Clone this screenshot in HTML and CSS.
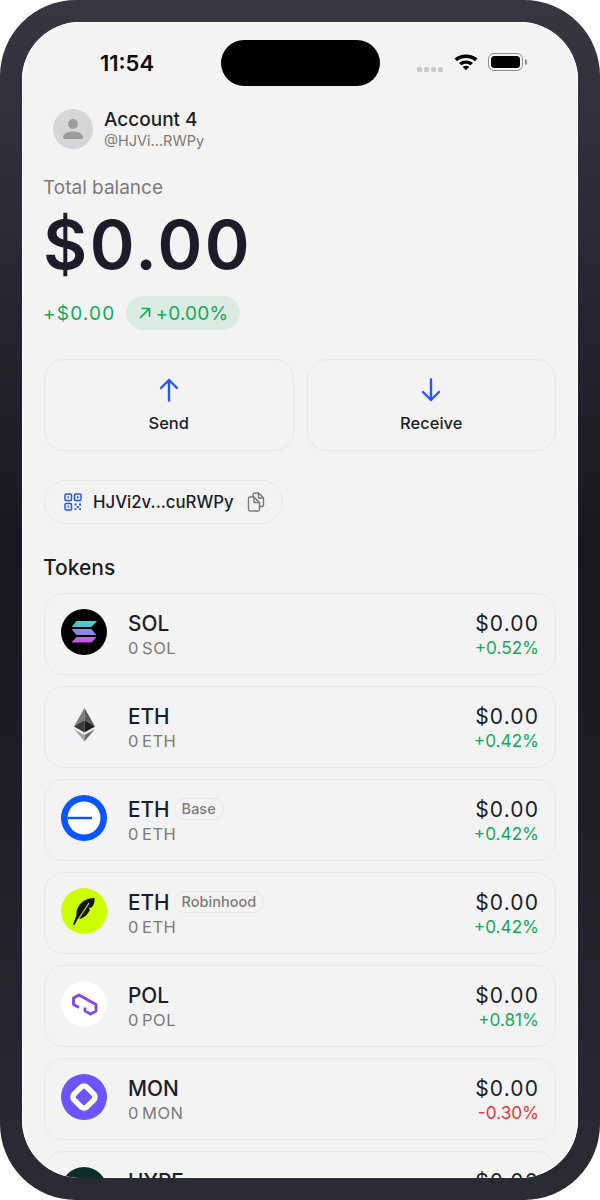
FILE: index.html
```html
<!DOCTYPE html>
<html lang="en">
<head>
    <meta charset="UTF-8">
    <meta name="viewport" content="width=device-width, initial-scale=1.0">
    <title>Wallet</title>
    <link rel="stylesheet" href="styles.css">
</head>
<body>
    <div class="device">
        <div class="screen">
            <div class="status-bar">
                <span class="time">11:54</span>
                <div class="island"></div>
                <div class="status-icons">
                    <div class="signal"><i></i><i></i><i></i><i></i></div>
                    <svg class="wifi" width="26" height="20" viewBox="0 0 26 20">
                        <path d="M1.500 6.600C7.800 1 18.200 1 24.500 6.600L22 9.200C17 4.900 9 4.900 4 9.200Z" fill="#000"/>
                        <path d="M6 11C10 7.700 16 7.700 20 11L17.700 13.300C15 11.200 11 11.200 8.300 13.300Z" fill="#000"/>
                        <path d="M9.700 14.700C11.700 13.300 14.300 13.300 16.300 14.700L13 18.200Z" fill="#000"/>
                    </svg>
                    <div class="battery"><div class="battery-fill"></div></div>
                    <div class="battery-cap"></div>
                </div>
            </div>

            <div class="account">
                <div class="avatar">
                    <svg width="24" height="24" viewBox="0 0 24 24">
                        <circle cx="12" cy="7" r="5" fill="#9b9ba0"/>
                        <path d="M2 20.500C2 16.500 7 14.500 12 14.500S22 16.500 22 20.500C22 21.500 21 22 20 22H4C3 22 2 21.500 2 20.500Z" fill="#9b9ba0"/>
                    </svg>
                </div>
                <div>
                    <div class="account-name">Account 4</div>
                    <div class="account-handle">@HJVi...RWPy</div>
                </div>
            </div>

            <div class="balance">
                <div class="balance-label">Total balance</div>
                <div class="balance-value">$0.00</div>
                <div class="balance-change">
                    <span class="up">+$0.00</span>
                    <span class="change-pill up">
                        <svg width="14" height="14" viewBox="0 0 14 14" fill="none" stroke="#16a858" stroke-width="1.700" stroke-linecap="round" stroke-linejoin="round">
                            <path d="M2.500 11.500L11.500 2.500M4 2.500H11.500V10"/>
                        </svg>
                        +0.00%
                    </span>
                </div>
            </div>

            <div class="actions">
                <div class="action">
                    <svg width="24" height="24" viewBox="0 0 24 24" fill="none" stroke="#2a55f5" stroke-width="2.400" stroke-linecap="round" stroke-linejoin="round">
                        <path d="M12 22.500V2M4 10L12 2L20 10"/>
                    </svg>
                    <span>Send</span>
                </div>
                <div class="action">
                    <svg width="24" height="24" viewBox="0 0 24 24" fill="none" stroke="#2a55f5" stroke-width="2.400" stroke-linecap="round" stroke-linejoin="round">
                        <path d="M12 1.500V22M4 14L12 22L20 14"/>
                    </svg>
                    <span>Receive</span>
                </div>
            </div>

            <div class="address">
                <svg width="18" height="18" viewBox="0 0 18 18" fill="none" stroke="#2a55f5" stroke-width="1.500">
                    <rect x="1" y="1" width="6.500" height="6.500" rx="1.200"/>
                    <rect x="10.500" y="1" width="6.500" height="6.500" rx="1.200"/>
                    <rect x="1" y="10.500" width="6.500" height="6.500" rx="1.200"/>
                    <path d="M3.500 4.200h1.500M13 4.200h1.500M3.500 13.800h1.500" stroke-width="2"/>
                    <path d="M10.500 10.500h2v2h-2zM15 10.500h2v2h-2zM12.800 13h2v2h-2zM10.500 15.300h2v1.700h-2zM15 15.300h2v1.700h-2z" fill="#2a55f5" stroke="none"/>
                </svg>
                <span class="address-text">HJVi2v...cuRWPy</span>
                <svg width="18" height="20" viewBox="0 0 18 20" fill="none" stroke="#7a7a75" stroke-width="1.400" stroke-linejoin="round">
                    <path d="M6 5V2.500C6 1.700 6.700 1 7.500 1H11.500L16.500 6V13C16.500 13.800 15.800 14.500 15 14.500H12.500"/>
                    <path d="M1.500 6.500C1.500 5.700 2.200 5 3 5H7L12.500 10.500V17.500C12.500 18.300 11.800 19 11 19H3C2.200 19 1.500 18.300 1.500 17.500Z"/>
                    <path d="M7 5V10.500H12.500M11.500 1V6H16.500"/>
                </svg>
            </div>

            <h2 class="tokens-title">Tokens</h2>

            <div class="tokens">
                <div class="token">
                    <svg class="token-icon" viewBox="0 0 46 46">
                        <defs>
                            <linearGradient id="sol" gradientUnits="userSpaceOnUse" x1="23" y1="12" x2="23" y2="33">
                                <stop offset="0" stop-color="#32e0c0"/>
                                <stop offset="0.500" stop-color="#7f8fe0"/>
                                <stop offset="1" stop-color="#d84cf5"/>
                            </linearGradient>
                        </defs>
                        <circle cx="23" cy="23" r="23" fill="#000"/>
                        <path d="M15.500 12H36L30.500 18H10.500ZM10.500 20H30.500L35.500 26H15.500ZM15.500 28H35.500L30.500 33.500H10.500Z" fill="url(#sol)"/>
                    </svg>
                    <div class="token-info">
                        <div class="token-name"><span>SOL</span></div>
                        <div class="token-amount">0 SOL</div>
                    </div>
                    <div class="token-values">
                        <div class="token-price">$0.00</div>
                        <div class="token-pct up">+0.52%</div>
                    </div>
                </div>

                <div class="token">
                    <svg class="token-icon" viewBox="0 0 46 46">
                        <circle cx="23" cy="23" r="23" fill="#f4f4f6"/>
                        <path d="M23.500 6V18L13 24.500Z" fill="#7d7d7d"/>
                        <path d="M23.500 6V18L34 24.500Z" fill="#5a5a5a"/>
                        <path d="M13 24.500L23.500 18V30.500Z" fill="#3a3a3a"/>
                        <path d="M34 24.500L23.500 18V30.500Z" fill="#1d1d1d"/>
                        <path d="M13 27L23.500 33V39.500Z" fill="#a3a3a3"/>
                        <path d="M34 27L23.500 33V39.500Z" fill="#6c6c6c"/>
                    </svg>
                    <div class="token-info">
                        <div class="token-name"><span>ETH</span></div>
                        <div class="token-amount">0 ETH</div>
                    </div>
                    <div class="token-values">
                        <div class="token-price">$0.00</div>
                        <div class="token-pct up">+0.42%</div>
                    </div>
                </div>

                <div class="token">
                    <svg class="token-icon" viewBox="0 0 46 46">
                        <circle cx="23" cy="23" r="23" fill="#0a55ff"/>
                        <circle cx="23" cy="23" r="16.500" fill="#fff"/>
                        <rect x="6.500" y="21.800" width="24.500" height="2.400" fill="#0a55ff"/>
                    </svg>
                    <div class="token-info">
                        <div class="token-name"><span>ETH</span><em class="chain">Base</em></div>
                        <div class="token-amount">0 ETH</div>
                    </div>
                    <div class="token-values">
                        <div class="token-price">$0.00</div>
                        <div class="token-pct up">+0.42%</div>
                    </div>
                </div>

                <div class="token">
                    <svg class="token-icon" viewBox="0 0 46 46">
                        <circle cx="23" cy="23" r="23" fill="#ccff00"/>
                        <path d="M12 36.500L15.500 27C15 22 17.500 16.500 22.500 13C26 10.800 30 9.800 33.500 10C34 14 33 17 30.500 19.500L27.500 20L29 21.500C27.500 25.500 24.500 28.500 21.500 30C19.500 31 18 31 17 30.500L13.500 37Z" fill="#141414"/>
                        <path d="M17.500 31L28 15" stroke="#ccff00" stroke-width="1.100" fill="none"/>
                    </svg>
                    <div class="token-info">
                        <div class="token-name"><span>ETH</span><em class="chain">Robinhood</em></div>
                        <div class="token-amount">0 ETH</div>
                    </div>
                    <div class="token-values">
                        <div class="token-price">$0.00</div>
                        <div class="token-pct up">+0.42%</div>
                    </div>
                </div>

                <div class="token">
                    <svg class="token-icon" viewBox="0 0 46 46">
                        <circle cx="23" cy="23" r="23" fill="#fff"/>
                        <path d="M18 26.500L12.500 23.500V17L18 14L23.500 17L29.500 20.500L35 23.500V30L29.500 33L24 30V26.500" fill="none" stroke="#8247e5" stroke-width="2.800" stroke-linejoin="round"/>
                    </svg>
                    <div class="token-info">
                        <div class="token-name"><span>POL</span></div>
                        <div class="token-amount">0 POL</div>
                    </div>
                    <div class="token-values">
                        <div class="token-price">$0.00</div>
                        <div class="token-pct up">+0.81%</div>
                    </div>
                </div>

                <div class="token">
                    <svg class="token-icon" viewBox="0 0 46 46">
                        <circle cx="23" cy="23" r="23" fill="#6e54ff"/>
                        <rect x="14" y="14" width="18" height="18" rx="4" transform="rotate(45 23 23)" fill="none" stroke="#fff" stroke-width="5.500" stroke-linejoin="round"/>
                    </svg>
                    <div class="token-info">
                        <div class="token-name"><span>MON</span></div>
                        <div class="token-amount">0 MON</div>
                    </div>
                    <div class="token-values">
                        <div class="token-price">$0.00</div>
                        <div class="token-pct down">-0.30%</div>
                    </div>
                </div>

                <div class="token">
                    <svg class="token-icon" viewBox="0 0 46 46">
                        <circle cx="23" cy="23" r="23" fill="#0b2e26"/>
                    </svg>
                    <div class="token-info">
                        <div class="token-name"><span>HYPE</span></div>
                        <div class="token-amount">0 HYPE</div>
                    </div>
                    <div class="token-values">
                        <div class="token-price">$0.00</div>
                        <div class="token-pct up">+0.00%</div>
                    </div>
                </div>
            </div>
        </div>
    </div>
</body>
</html>
```

FILE: styles.css
```css
:root {
    --ink: #1c1d29;
    --muted: #7c7b76;
    --line: #e8e8e8;
    --green: #16a858;
    --red: #e5383b;
    --screen-bg: #f3f3f3;
}

* {
    margin: 0;
    padding: 0;
    box-sizing: border-box;
}

body {
    font-family: Inter, "Noto Sans", sans-serif;
    color: var(--ink);
    background: #fff;
}

.device {
    width: 600px;
    height: 1200px;
    padding: 22px;
    border-radius: 76px;
    background: linear-gradient(180deg, #363741 0%, #191a1f 45%, #1c1c22 60%, #2b2b34 100%);
}

.screen {
    height: 1156px;
    overflow: hidden;
    border-radius: 58px;
    background: var(--screen-bg);
    box-shadow: inset 0 0 0 1px #fff;
}

/* status bar */
.status-bar {
    height: 86px;
    padding: 18px 30px 22px 78px;
    display: flex;
    align-items: center;
}

.time {
    width: 121px;
    flex: none;
    font-size: 22px;
    font-weight: 600;
    color: #0b0b0b;
}

.island {
    width: 159px;
    height: 46px;
    flex: none;
    border-radius: 23px;
    background: #000;
}

.status-icons {
    margin: -2px 0 0 37px;
    display: flex;
    align-items: center;
}

.signal {
    display: flex;
    gap: 2px;
    margin: 14px 10px 0 0;
}

.signal i {
    width: 5px;
    height: 5px;
    border-radius: 1.500px;
    background: #c9c9c9;
}

.wifi {
    margin-right: 9px;
}

.battery {
    width: 35px;
    height: 18px;
    padding: 2px;
    border: 1.500px solid #8e8e8e;
    border-radius: 6px;
}

.battery-fill {
    height: 100%;
    border-radius: 3.500px;
    background: #000;
}

.battery-cap {
    width: 2px;
    height: 6px;
    margin-left: 2px;
    border-radius: 0 2px 2px 0;
    background: #8e8e8e;
}

/* account header */
.account {
    display: flex;
    align-items: center;
    gap: 11px;
    margin-left: 31px;
}

.avatar {
    width: 40px;
    height: 40px;
    border-radius: 50%;
    background: #d6d6d9;
    display: flex;
    align-items: center;
    justify-content: center;
}

.account-name {
    font-size: 19px;
    font-weight: 500;
    line-height: 24px;
}

.account-handle {
    font-size: 14.500px;
    line-height: 18px;
    color: var(--muted);
}

/* balance */
.balance {
    margin: 25px 0 0 21px;
}

.balance-label {
    font-size: 19px;
    line-height: 26px;
    color: var(--muted);
}

.balance-value {
    font-size: 68px;
    font-weight: 600;
    line-height: 86px;
    letter-spacing: 2.500px;
}

.balance-change {
    display: flex;
    align-items: center;
    gap: 11px;
    margin-top: 9px;
    font-size: 19px;
    letter-spacing: 1.200px;
}

.up {
    color: var(--green);
}

.down {
    color: var(--red);
}

.change-pill {
    display: flex;
    align-items: center;
    gap: 3px;
    height: 34px;
    padding: 0 12px;
    border-radius: 17px;
    background: #dcebe2;
    letter-spacing: 0.200px;
}

/* send / receive */
.actions {
    display: flex;
    gap: 13px;
    margin: 29px 22px 0;
}

.action {
    flex: 1;
    height: 92px;
    padding-top: 18px;
    border: 1.500px solid var(--line);
    border-radius: 20px;
    display: flex;
    flex-direction: column;
    align-items: center;
    gap: 11px;
    font-size: 16.500px;
    font-weight: 500;
}

.address {
    width: 239px;
    height: 44px;
    margin: 29px 0 0 22px;
    padding: 0 17px 0 19px;
    border: 1.500px solid var(--line);
    border-radius: 22px;
    display: flex;
    align-items: center;
}

.address-text {
    flex: 1;
    margin-left: 11px;
    font-size: 16.800px;
    font-weight: 500;
}

.tokens-title {
    margin: 30px 0 11px 21px;
    font-size: 21px;
    line-height: 28px;
    font-weight: 500;
}

/* token rows */
.tokens {
    display: flex;
    flex-direction: column;
    gap: 11px;
    margin: 0 22px;
}

.token {
    height: 82px;
    flex: none;
    padding: 0 16px;
    border: 1.500px solid var(--line);
    border-radius: 20px;
    display: flex;
    align-items: center;
}

.token-icon {
    width: 46px;
    height: 46px;
    flex: none;
    margin-top: -4px;
}

.token-info {
    flex: 1;
    margin-left: 21px;
    padding-top: 2px;
}

.token-name {
    display: flex;
    align-items: center;
    gap: 2px;
    font-size: 20.800px;
    font-weight: 500;
    line-height: 26px;
}

.chain {
    padding: 0 7px;
    height: 22px;
    margin: -2px 0 0 2px;
    border: 1.500px solid #e6e6e6;
    border-radius: 11px;
    font-size: 14.500px;
    font-style: normal;
    font-weight: 500;
    line-height: 19px;
    color: var(--muted);
}

.token-amount {
    font-size: 16.500px;
    line-height: 22px;
    letter-spacing: 0.500px;
    word-spacing: -2px;
    color: var(--muted);
}

.token-values {
    text-align: right;
    padding-top: 2px;
}

.token-price {
    font-size: 21px;
    line-height: 26px;
    letter-spacing: 1.100px;
}

.token-pct {
    font-size: 17.200px;
    line-height: 22px;
}
```
